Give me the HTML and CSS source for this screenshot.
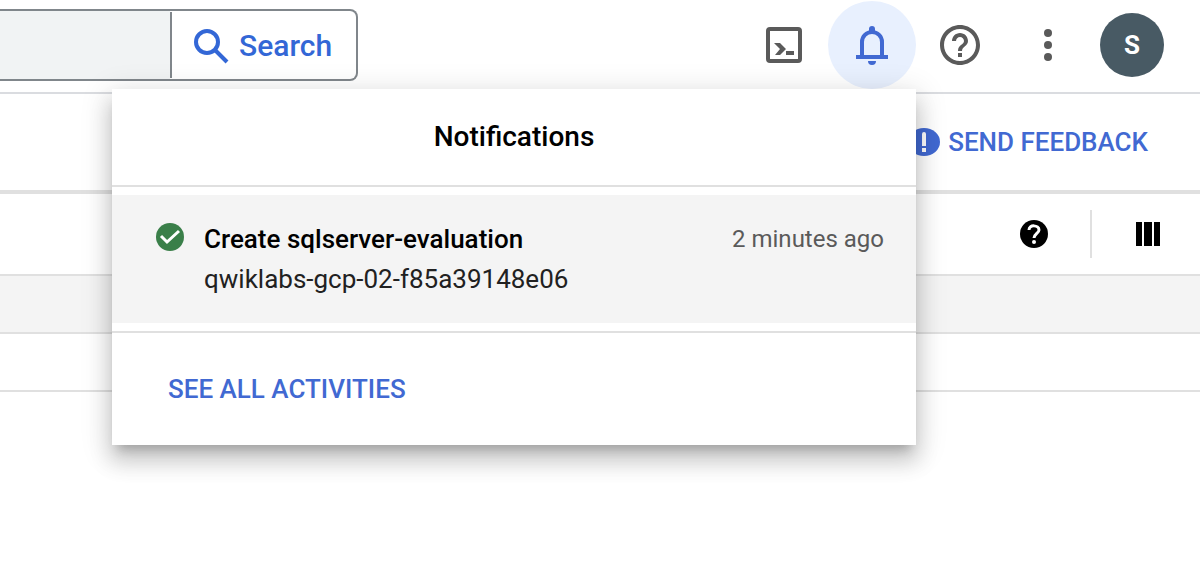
FILE: index.html
```html
<!DOCTYPE html>
<html lang="en">
<head>
<meta charset="utf-8">
<title>Notifications</title>
<link rel="stylesheet" href="styles.css">
</head>
<body>
<header class="topbar">
  <form class="search">
    <input class="search-input" type="text" aria-label="Search query">
    <button class="search-button" type="button">
      <svg width="36" height="36" viewBox="0 0 36 36" fill="none" stroke="currentColor" stroke-width="4" aria-hidden="true"><circle cx="14" cy="14" r="11"/><path d="M22 22l12 12"/></svg>
      <span>Search</span>
    </button>
  </form>
  <nav class="actions">
    <button class="icon-button" type="button" aria-label="Cloud Shell">
      <svg width="48" height="48" viewBox="0 0 48 48"><rect x="8" y="8" width="32" height="32" rx="2" fill="none" stroke="currentColor" stroke-width="4"/><path fill="currentColor" d="M14 22h6l6 6-6 6h-5l5-6zM26 30h8v4h-8z"/></svg>
    </button>
    <div class="bell">
      <button class="icon-button active" type="button" aria-label="Notifications" aria-expanded="true">
        <svg width="48" height="48" viewBox="0 0 48 48"><path d="M14 36V21a10 10 0 0 1 20 0v15" fill="none" stroke="currentColor" stroke-width="4"/><path fill="currentColor" d="M8 34h32v4H8zM20 40h8a4 4 0 0 1-8 0zM21 11V8a3 3 0 0 1 6 0v3z"/></svg>
      </button>
      <section class="panel" aria-labelledby="panel-title">
        <h2 class="panel-title" id="panel-title">Notifications</h2>
        <div class="panel-list">
          <article class="notice">
            <svg class="notice-icon" width="28" height="28" viewBox="0 0 28 28" aria-hidden="true"><circle cx="14" cy="14" r="14" fill="#3a7f49"/><path d="M5 13l6 6L23 8" fill="none" stroke="#fff" stroke-width="3"/></svg>
            <div class="notice-text">
              <h3 class="notice-title">Create sqlserver-evaluation</h3>
              <p class="notice-project">qwiklabs-gcp-02-f85a39148e06</p>
            </div>
            <time class="notice-time">2 minutes ago</time>
          </article>
        </div>
        <footer class="panel-footer"><a class="link" href="#activities">SEE ALL ACTIVITIES</a></footer>
      </section>
    </div>
    <button class="icon-button" type="button" aria-label="Help">
      <svg width="48" height="48" viewBox="0 0 24 24" fill="currentColor"><path d="M11 18h2v-2h-2v2zm1-16C6.480 2 2 6.480 2 12s4.480 10 10 10 10-4.480 10-10S17.520 2 12 2zm0 18c-4.410 0-8-3.590-8-8s3.590-8 8-8 8 3.590 8 8-3.590 8-8 8zm0-14c-2.210 0-4 1.790-4 4h2c0-1.100.900-2 2-2s2 .900 2 2c0 2-3 1.750-3 5h2c0-2.250 3-2.500 3-5 0-2.210-1.790-4-4-4z"/></svg>
    </button>
    <button class="icon-button" type="button" aria-label="More options">
      <svg width="48" height="48" viewBox="0 0 48 48" fill="currentColor"><circle cx="24" cy="12" r="4"/><circle cx="24" cy="24" r="4"/><circle cx="24" cy="36" r="4"/></svg>
    </button>
    <button class="avatar" type="button" aria-label="Account S">S</button>
  </nav>
</header>
<main>
  <div class="page-bar">
    <a class="link feedback" href="#feedback">
      <svg width="32" height="28" viewBox="0 0 32 28" aria-hidden="true"><ellipse cx="16" cy="14" rx="16" ry="14" fill="currentColor"/><path fill="#fff" d="M14 6a2 2 0 0 1 4 0v12h-4zM14 20h4v4h-4z"/></svg>
      <span>SEND FEEDBACK</span>
    </a>
  </div>
  <div class="toolbar">
    <button class="tool" type="button" aria-label="Table help">
      <svg width="28" height="28" viewBox="0 0 28 28"><circle cx="14" cy="14" r="14"/><path d="M9 10c0-6 10-5 10 0 0 3-5 4-5 8" fill="none" stroke="#fff" stroke-width="3"/><circle cx="14" cy="22" r="2" fill="#fff"/></svg>
    </button>
    <span class="tool-divider"></span>
    <button class="tool" type="button" aria-label="Columns">
      <svg width="24" height="24" viewBox="0 0 24 24"><path d="M0 0h6v24H0zM8 0h8v24H8zM18 0h6v24h-6z"/></svg>
    </button>
  </div>
  <div class="row shaded"></div>
  <div class="row"></div>
</main>
</body>
</html>
```
FILE: styles.css
```css
* { box-sizing: border-box; }
body {
  min-height: 100vh;
  margin: 0;
  background: #fff;
  color: #212121;
  font: 400 26px/40px Roboto, sans-serif;
}
button {
  padding: 0;
  border: 0;
  background: none;
  color: inherit;
  font: inherit;
}
svg { display: block; flex: none; }
h2, h3, p { margin: 0; }

.topbar {
  display: flex;
  align-items: center;
  justify-content: space-between;
  padding: 1px 36px 3px 0;
  border-bottom: 2px solid #dadce0;
}
.search {
  display: flex;
  height: 72px;
  padding: 1px 0;
  border: 2px solid #80868b;
  border-left: 0;
  border-radius: 0 8px 8px 0;
  background: linear-gradient(to right, #f1f3f4 170px, #fff 170px);
}
.search-input {
  width: 170px;
  padding: 0 16px;
  border: 0;
  background: transparent;
  font: inherit;
}
.search-button {
  display: flex;
  align-items: center;
  gap: 10px;
  padding: 2px 24px 0 21px;
  border-left: 2px solid #80868b;
  color: #3367d6;
  font-size: 30px;
  font-weight: 500;
}
.actions { display: flex; align-items: center; }
.icon-button {
  display: grid;
  place-items: center;
  width: 88px;
  height: 88px;
  border-radius: 50%;
  color: #5a5a5a;
}
.icon-button.active { background: #e8f0fe; color: #4169d2; }
.avatar {
  width: 64px;
  height: 64px;
  margin-left: 8px;
  border-radius: 50%;
  background: #485a64;
  color: #fff;
  font-weight: 700;
}

.bell { position: relative; }
.panel {
  position: absolute;
  top: 100%;
  right: 0;
  z-index: 1;
  width: 804px;
  background: #fff;
  box-shadow:
    0 10px 10px -6px rgba(0, 0, 0, 0.2),
    0 16px 20px 2px rgba(0, 0, 0, 0.14),
    0 6px 28px 4px rgba(0, 0, 0, 0.12);
}
.panel-title {
  padding: 28px;
  border-bottom: 2px solid #e0e0e0;
  color: #000;
  font-size: 28px;
  font-weight: 500;
  text-align: center;
}
.panel-list { padding: 8px 0; }
.notice {
  display: flex;
  align-items: flex-start;
  gap: 20px;
  padding: 24px 32px 24px 44px;
  background: #f4f4f4;
}
.notice-icon { margin-top: 4px; }
.notice-text { flex: 1; }
.notice-title { color: #000; font-size: 26px; font-weight: 500; }
.notice-time { color: #5a5a5a; font-size: 24px; }
.panel-footer { padding: 36px 56px; border-top: 2px solid #e0e0e0; }
.link { color: #4169d2; font-weight: 500; text-decoration: none; }

.page-bar {
  display: flex;
  justify-content: flex-end;
  padding: 28px 52px;
  border-bottom: 4px solid #e0e0e0;
}
.feedback { display: flex; align-items: center; gap: 8px; }
.toolbar {
  display: flex;
  align-items: center;
  justify-content: flex-end;
  padding: 16px 40px;
  border-bottom: 2px solid #e0e0e0;
}
.tool-divider {
  width: 2px;
  height: 48px;
  margin: 0 44px 0 42px;
  background: #e0e0e0;
}
.row { height: 58px; border-bottom: 2px solid #e0e0e0; }
.row.shaded { background: #f4f4f4; }
```
